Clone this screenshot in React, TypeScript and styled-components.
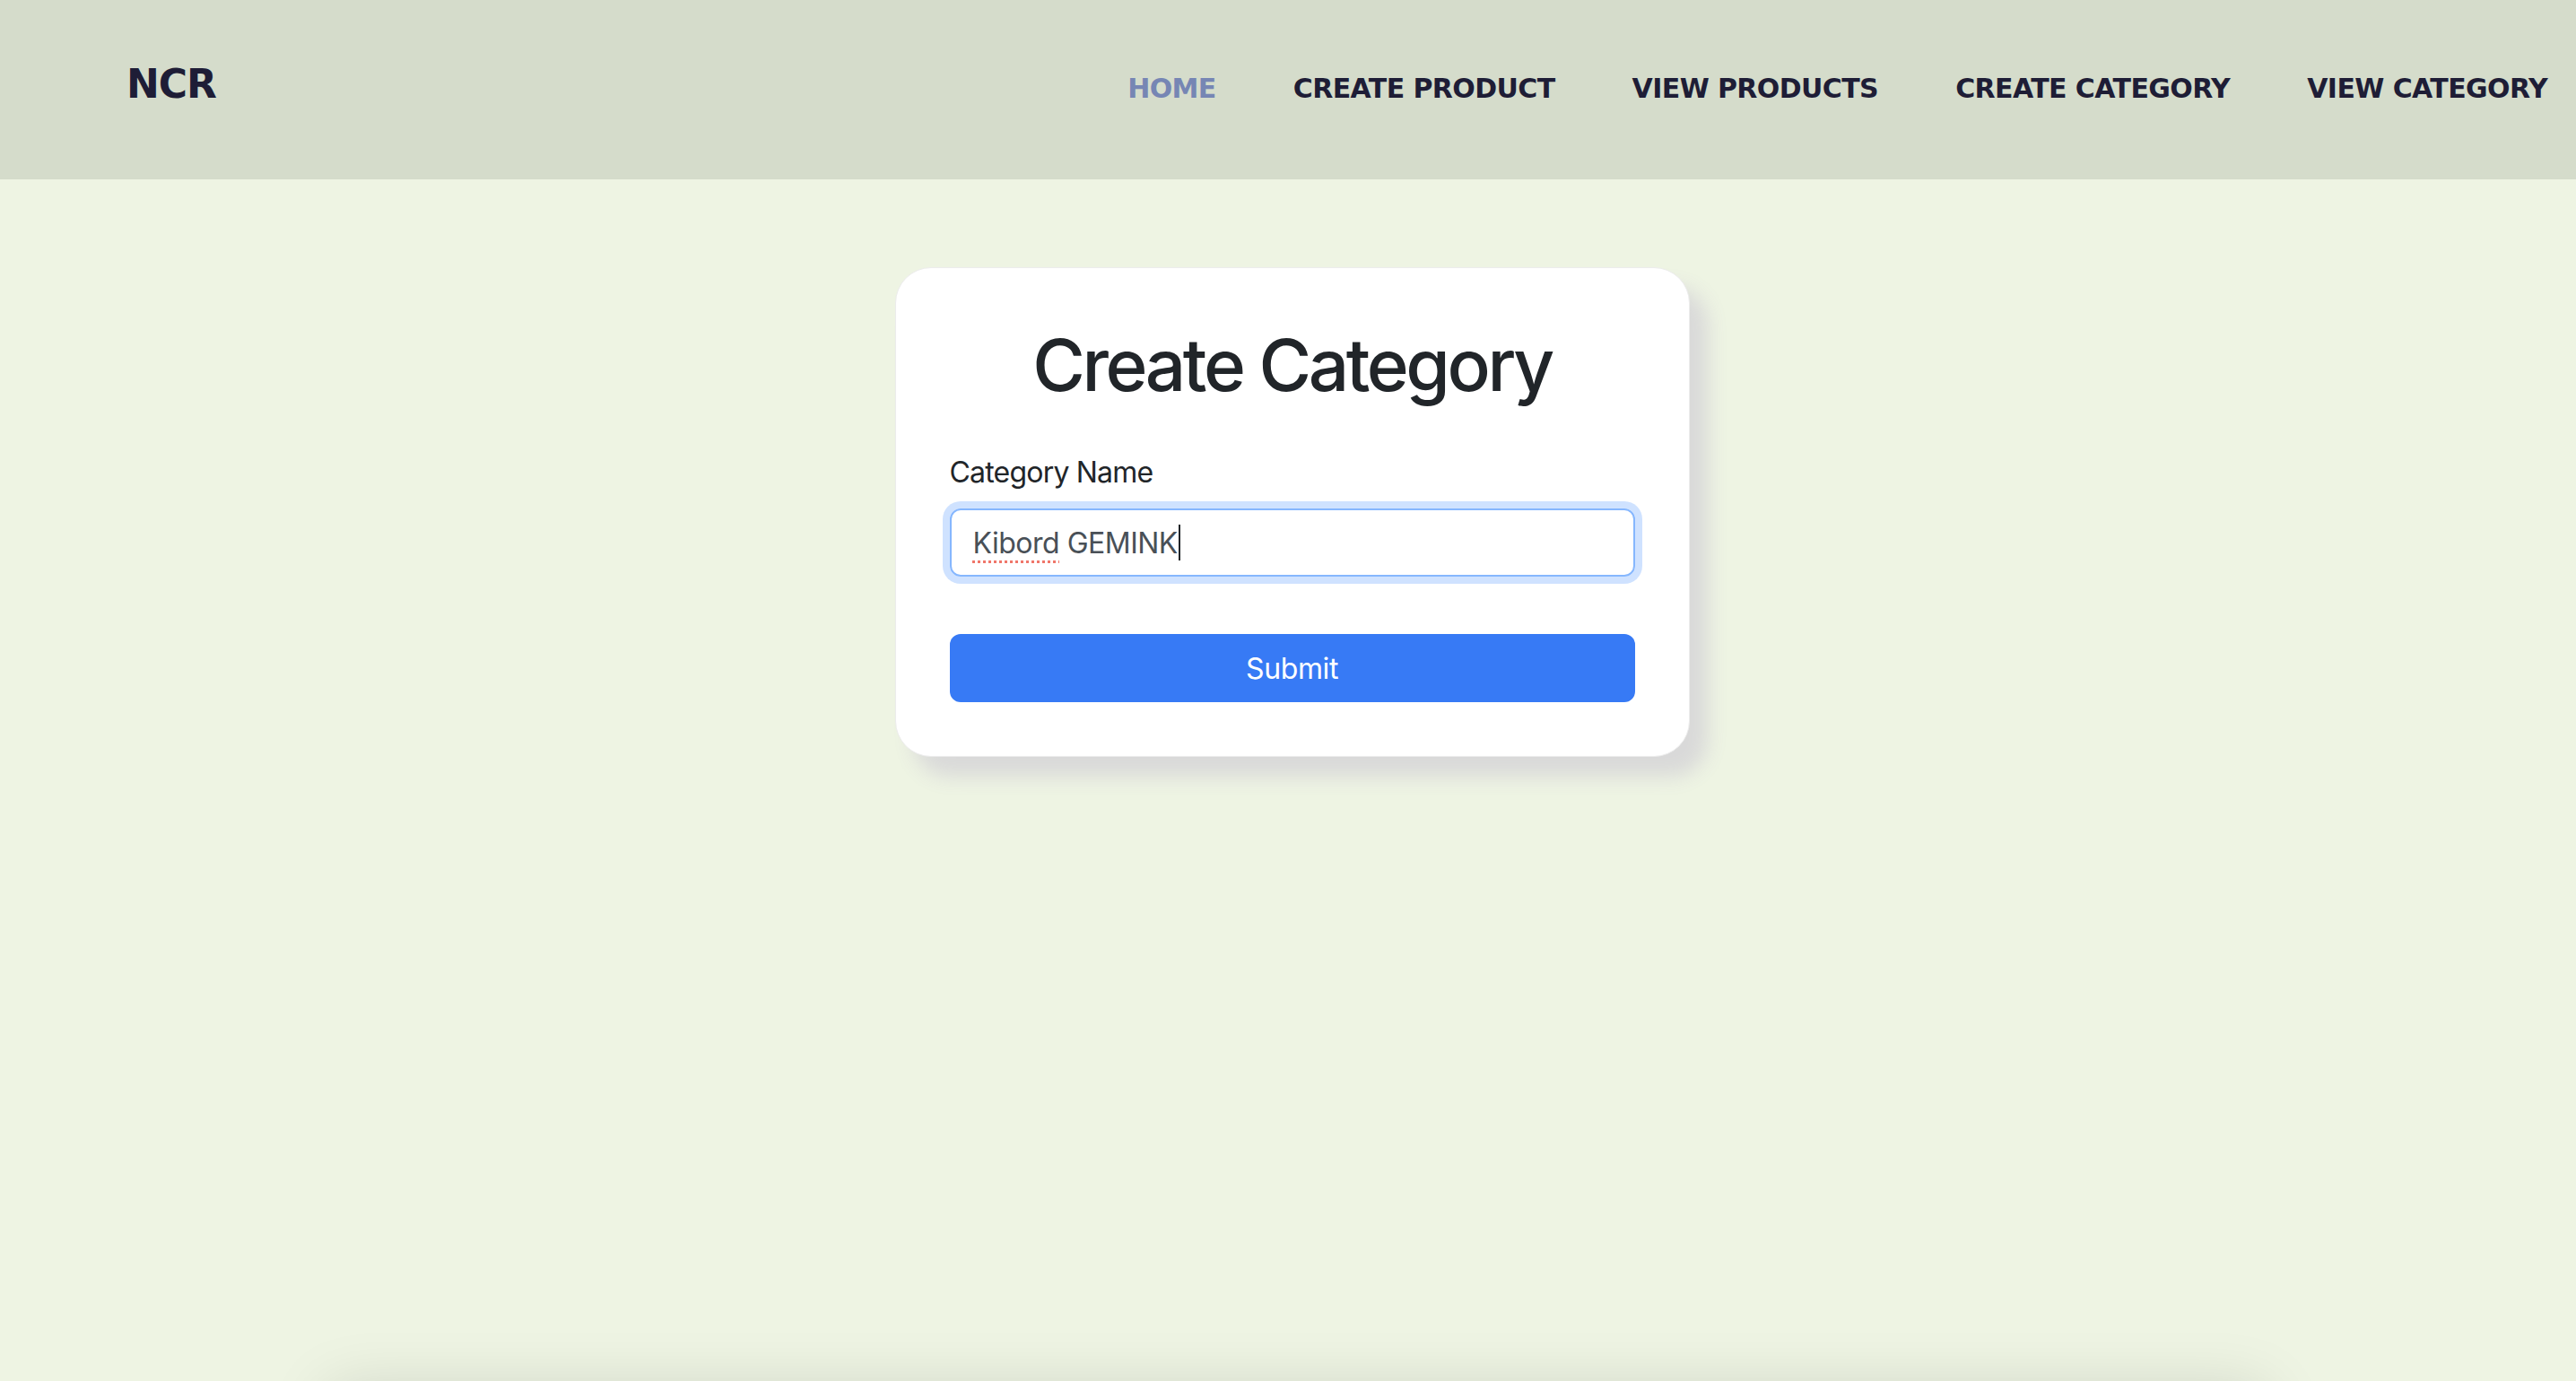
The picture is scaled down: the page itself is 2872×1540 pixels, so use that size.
import React from "react";
import styled, { createGlobalStyle } from "styled-components";

const GlobalStyle = createGlobalStyle`
  html, body {
    margin: 0;
    padding: 0;
    background: #eef4e3;
    overflow: hidden;
  }
  * { box-sizing: border-box; }
`;

const Page = styled.div`
  display: flex;
  flex-direction: column;
  min-height: 1540px;
`;

const Header = styled.header`
  height: 200px;
  background: #d5dccb;
  display: flex;
  align-items: baseline;
  justify-content: space-between;
  padding: 72px 32px 0 141px;
`;

const Brand = styled.div`
  font-family: "DejaVu Sans", sans-serif;
  font-weight: 700;
  font-size: 44px;
  line-height: 1;
  color: #1e1d36;
  letter-spacing: -1px;
`;

const Nav = styled.nav`
  display: flex;
  align-items: baseline;
  gap: 86px;
`;

const NavLink = styled.a<{ $active?: boolean }>`
  font-family: "DejaVu Sans", sans-serif;
  font-weight: 700;
  font-size: 30px;
  line-height: 1;
  text-transform: uppercase;
  text-decoration: none;
  color: ${(p) => (p.$active ? "#7686b4" : "#1e1d36")};
  letter-spacing: -0.6px;
`;

const Main = styled.main`
  display: flex;
  flex-direction: column;
  align-items: center;
  height: 1340px;
  padding-top: 98px;
`;

const Card = styled.section`
  width: 886px;
  margin-left: 9px;
  padding: 60px;
  background: #ffffff;
  border-radius: 40px;
  border: 1px solid #ececec;
  box-shadow: 20px 22px 22px #d9d9d9;
  font-family: Inter, "Liberation Sans", sans-serif;
`;

const Title = styled.h1`
  margin: 0 0 48px;
  font-size: 80px;
  font-weight: 500;
  line-height: 1.2;
  text-align: center;
  color: #212529;
  letter-spacing: -3.4px;
`;

const Label = styled.label`
  display: block;
  font-size: 32px;
  line-height: 48px;
  color: #212529;
  margin-bottom: 16px;
  letter-spacing: -0.8px;
`;

const Field = styled.div`
  display: flex;
  align-items: center;
  height: 76px;
  padding: 0 24px;
  border: 2px solid #86b7fe;
  border-radius: 12px;
  box-shadow: 0 0 0 8px rgba(13, 110, 253, 0.2);
  font-size: 32px;
  color: #495057;
  white-space: pre;
  letter-spacing: -0.5px;
`;

const Misspelled = styled.span`
  text-decoration: underline dotted #f0766a;
  text-decoration-thickness: 3px;
  text-underline-offset: 8px;
`;

const Caret = styled.span`
  display: inline-block;
  width: 2px;
  height: 40px;
  background: #212529;
  margin-left: 1px;
`;

const SubmitButton = styled.button`
  display: block;
  width: 100%;
  height: 76px;
  margin-top: 64px;
  border: none;
  border-radius: 12px;
  background: #377af5;
  color: #ffffff;
  font-family: Inter, "Liberation Sans", sans-serif;
  font-size: 32px;
  letter-spacing: -0.4px;
  cursor: pointer;
`;

const Footer = styled.footer`
  width: 2160px;
  height: 200px;
  margin: 20px auto 0;
  transform: translateX(10px);
  background: #dfe6d4;
  box-shadow: 0 -10px 70px rgba(0, 0, 0, 0.14);
`;

export default function App() {
  return (
    <>
      <GlobalStyle />
      <Page>
        <Header>
          <Brand>NCR</Brand>
          <Nav>
            <NavLink $active href="#">Home</NavLink>
            <NavLink href="#">Create Product</NavLink>
            <NavLink href="#">View Products</NavLink>
            <NavLink href="#">Create Category</NavLink>
            <NavLink href="#">View Category</NavLink>
          </Nav>
        </Header>
        <Main>
          <Card>
            <Title>Create Category</Title>
            <Label>Category Name</Label>
            <Field role="textbox" aria-label="Category Name">
              <Misspelled>Kibord</Misspelled>
              {" GEMINK"}
              <Caret />
            </Field>
            <SubmitButton type="submit">Submit</SubmitButton>
          </Card>
        </Main>
        <Footer />
      </Page>
    </>
  );
}
